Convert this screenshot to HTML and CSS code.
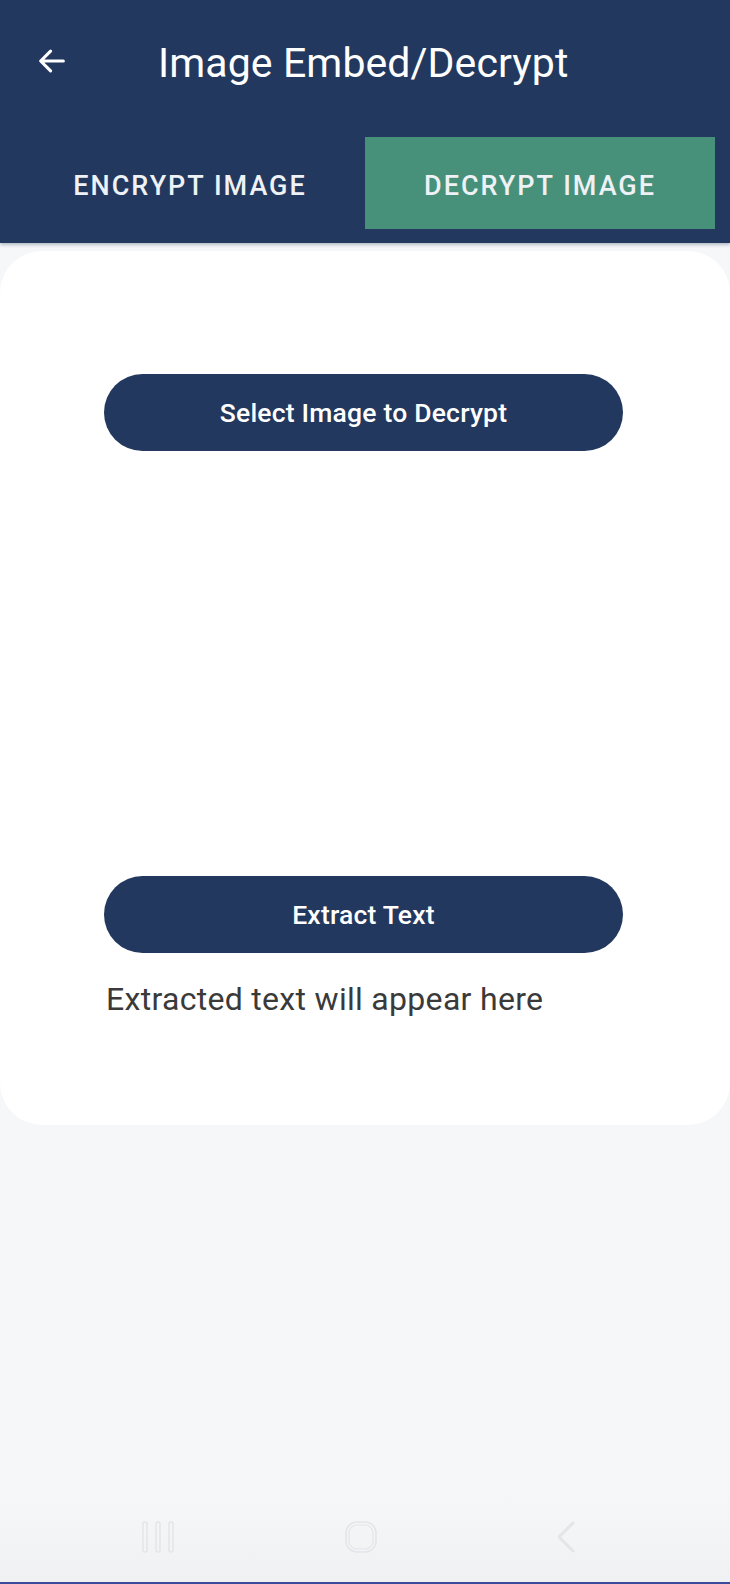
FILE: index.html
```html
<!DOCTYPE html>
<html lang="en">
<head>
<meta charset="utf-8">
<title>Image Embed/Decrypt</title>
<link rel="stylesheet" href="styles.css">
</head>
<body>
<div class="screen">
  <header class="appbar">
    <div class="toolbar">
      <svg class="back" width="34" height="34" viewBox="0 0 24 24" aria-hidden="true">
        <path d="M20 12H4.5M11 5l-7 7 7 7" fill="none" stroke="#ffffff" stroke-width="2.2" stroke-linecap="round" stroke-linejoin="round"/>
      </svg>
      <h1 class="title">Image Embed/Decrypt</h1>
    </div>
    <nav class="tabs">
      <div class="tab">ENCRYPT IMAGE</div>
      <div class="tab tab-active">DECRYPT IMAGE</div>
    </nav>
  </header>

  <main class="card">
    <button class="pill pill-select">Select Image to Decrypt</button>
    <div class="preview"></div>
    <button class="pill">Extract Text</button>
    <p class="result">Extracted text will appear here</p>
  </main>

  <div class="filler"></div>

  <footer class="navbar">
    <svg class="nav-icon" width="36" height="36" viewBox="0 0 36 36" aria-hidden="true">
      <rect x="3" y="3" width="4" height="30" rx="2" fill="none" stroke="#e3e5e9" stroke-width="1.5"/>
      <rect x="16" y="3" width="4" height="30" rx="2" fill="none" stroke="#e3e5e9" stroke-width="1.5"/>
      <rect x="29" y="3" width="4" height="30" rx="2" fill="none" stroke="#e3e5e9" stroke-width="1.5"/>
    </svg>
    <svg class="nav-icon" width="36" height="36" viewBox="0 0 36 36" aria-hidden="true">
      <rect x="3" y="3" width="30" height="30" rx="11" fill="none" stroke="#e3e5e9" stroke-width="1.6"/>
      <rect x="6" y="6" width="24" height="24" rx="8" fill="none" stroke="#e3e5e9" stroke-width="1.2"/>
    </svg>
    <svg class="nav-icon" width="36" height="36" viewBox="0 0 36 36" aria-hidden="true">
      <path d="M27 4L13 18l14 14" fill="none" stroke="#e3e5e9" stroke-width="3" stroke-linecap="round" stroke-linejoin="round"/>
    </svg>
  </footer>
  <div class="edge"></div>
</div>
</body>
</html>
```

FILE: styles.css
```css
* {
  box-sizing: border-box;
}

html, body {
  margin: 0;
  padding: 0;
}

body {
  background: #f6f7f9;
  font-family: Roboto, "Liberation Sans", Arial, sans-serif;
}

.screen {
  width: 730px;
  height: 1584px;
  display: flex;
  flex-direction: column;
  background: #f6f7f9;
  overflow: hidden;
}

.appbar {
  background: #23385e;
  padding-bottom: 14px;
  box-shadow: 0 2px 3px rgba(35, 56, 94, 0.3);
  position: relative;
  z-index: 1;
}

.toolbar {
  height: 122px;
  display: flex;
  align-items: center;
  padding-left: 35px;
}

.back {
  flex: none;
  display: block;
}

.title {
  margin: 0 0 0 89px;
  color: #ffffff;
  font-size: 41px;
  font-weight: 400;
  letter-spacing: 0.1px;
  line-height: 1;
  padding-top: 4px;
}

.tabs {
  margin-top: 15px;
  padding: 0 15px;
  display: grid;
  grid-template-columns: 350px 350px;
  height: 92px;
}

.tab {
  display: flex;
  align-items: center;
  justify-content: center;
  padding-top: 5px;
  color: #eef1f5;
  font-size: 27px;
  font-weight: 500;
  letter-spacing: 2px;
}

.tab-active {
  background: #47917a;
}

.card {
  margin-top: 8px;
  background: #ffffff;
  border-radius: 42px;
  height: 874px;
  flex: none;
  display: flex;
  flex-direction: column;
  align-items: flex-start;
  padding: 123px 0 0 104px;
}

.pill {
  width: 519px;
  height: 77px;
  border: none;
  border-radius: 39px;
  background: #23385e;
  color: #ffffff;
  font-family: Roboto, "Liberation Sans", Arial, sans-serif;
  font-size: 26.5px;
  font-weight: 500;
  letter-spacing: 0.2px;
  padding: 0;
}

.preview {
  height: 425px;
  flex: none;
}

.result {
  margin: 26px 0 0 2px;
  color: #3a3a3a;
  font-size: 32px;
  font-weight: 400;
  line-height: 40px;
  letter-spacing: 0.3px;
}

.filler {
  flex: 1;
}

.navbar {
  height: 90px;
  display: flex;
  align-items: center;
  justify-content: space-between;
  padding: 0 148px 0 140px;
  background: linear-gradient(#f6f7f9, #f0f1f3);
}

.nav-icon {
  display: block;
}

.edge {
  height: 2px;
  background: #3b4b9c;
  flex: none;
}
```
